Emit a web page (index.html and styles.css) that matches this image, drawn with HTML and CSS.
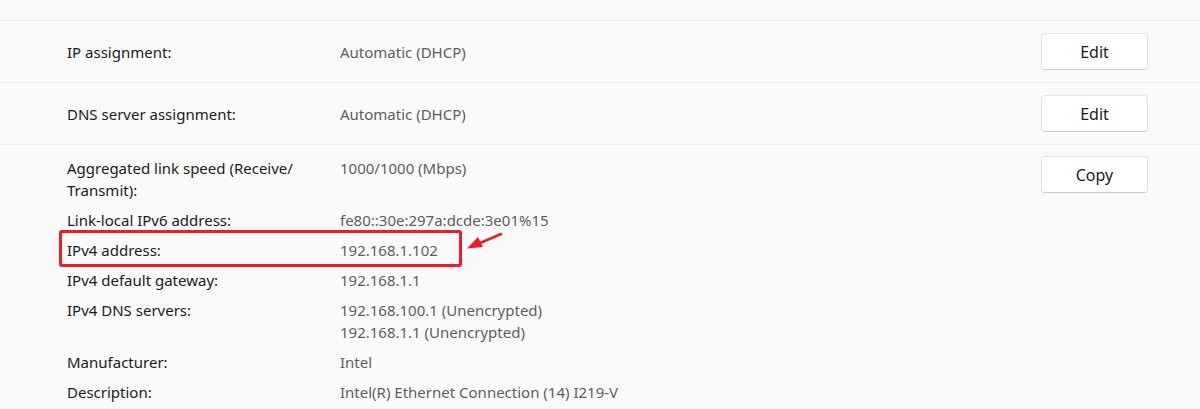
FILE: index.html
```html
<!DOCTYPE html>
<html>
<head>
<meta charset="utf-8">
<link rel="stylesheet" href="styles.css">
</head>
<body>
<div class="page">
  <div class="top"></div>
  <div class="row">
    <div class="label">IP assignment:</div>
    <div class="value">Automatic (DHCP)</div>
    <button class="btn">Edit</button>
  </div>
  <div class="row">
    <div class="label">DNS server assignment:</div>
    <div class="value">Automatic (DHCP)</div>
    <button class="btn">Edit</button>
  </div>
  <div class="details">
    <div class="list">
      <div class="item">
        <div class="label">Aggregated link speed (Receive/ Transmit):</div>
        <div class="value">1000/1000 (Mbps)</div>
      </div>
      <div class="item">
        <div class="label">Link-local IPv6 address:</div>
        <div class="value">fe80::30e:297a:dcde:3e01%15</div>
      </div>
      <div class="item highlight">
        <div class="label">IPv4 address:</div>
        <div class="value">192.168.1.102</div>
        <svg class="arrow" width="38" height="20" viewBox="0 0 38 20">
          <path d="M35 2 L13 11.5" stroke="#ee1c24" stroke-width="2.6" stroke-linecap="round" fill="none"/>
          <path d="M1 16.5 L12 5 L17 15 Z" fill="#ee1c24"/>
        </svg>
      </div>
      <div class="item">
        <div class="label">IPv4 default gateway:</div>
        <div class="value">192.168.1.1</div>
      </div>
      <div class="item">
        <div class="label">IPv4 DNS servers:</div>
        <div class="value">192.168.100.1 (Unencrypted)<br>192.168.1.1 (Unencrypted)</div>
      </div>
      <div class="item">
        <div class="label">Manufacturer:</div>
        <div class="value">Intel</div>
      </div>
      <div class="item">
        <div class="label">Description:</div>
        <div class="value">Intel(R) Ethernet Connection (14) I219-V</div>
      </div>
    </div>
    <button class="btn">Copy</button>
  </div>
</div>
</body>
</html>
```

FILE: styles.css
```css
html, body {
  margin: 0;
  padding: 0;
  background: #fafafa;
  overflow: hidden;
}
.page {
  width: 1200px;
  height: 409px;
  font-family: "Noto Sans", "Open Sans", sans-serif;
  font-size: 15px;
  color: #1b1b1b;
}
.top {
  height: 20px;
  border-bottom: 1px solid #ebebeb;
}
.row {
  height: 61px;
  display: flex;
  align-items: center;
  padding: 0 52px 0 67px;
  border-bottom: 1px solid #ebebeb;
}
.label {
  width: 250px;
  margin-right: 23px;
  line-height: 22px;
}
.value {
  flex: 1;
  color: #5e5e5e;
  line-height: 22px;
}
.btn {
  width: 107px;
  height: 37px;
  background: #ffffff;
  border: 1px solid #e3e3e3;
  border-bottom-color: #cdcdcd;
  border-radius: 4px;
  font-family: inherit;
  font-size: 16px;
  color: #1b1b1b;
  padding: 0;
}
.details {
  display: flex;
  align-items: flex-start;
  padding: 11px 52px 0 67px;
}
.list {
  flex: 1;
  display: flex;
  flex-direction: column;
  gap: 8px;
  padding-top: 1px;
}
.item {
  display: flex;
  position: relative;
}
.highlight::before {
  content: "";
  box-sizing: border-box;
  position: absolute;
  left: -8px;
  top: -9px;
  width: 403px;
  height: 37px;
  border: 3px solid #ee1c24;
  border-radius: 3px;
}
.arrow {
  position: absolute;
  left: 399px;
  top: -7px;
}
```
